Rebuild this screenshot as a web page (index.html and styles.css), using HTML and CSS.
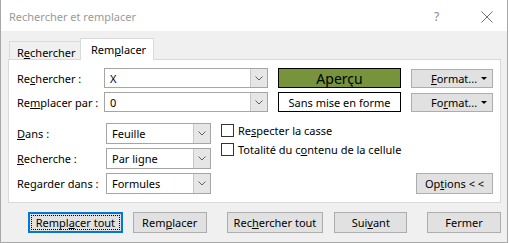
FILE: index.html
```html
<!DOCTYPE html>
<html lang="fr">
    <head>
        <meta charset="UTF-8" />
        <title>Rechercher et remplacer</title>
        <link rel="stylesheet" href="styles.css">
    </head>
    <body>
        <div class="dialog">
            <div class="titlebar">
                <span class="title">Rechercher et remplacer</span>
                <span class="help">?</span>
                <span class="close">
                    <svg width="12" height="12" viewBox="0 0 12 12"><path d="M0.5 0.5 L11.5 11.5 M11.5 0.5 L0.5 11.5" stroke="#707070" stroke-width="1" fill="none"/></svg>
                </span>
            </div>

            <div class="content">
                <div class="tabs">
                    <div class="tab">R<u>e</u>chercher</div>
                    <div class="tab active">Rem<u>p</u>lacer</div>
                </div>

                <div class="panel">
                    <div class="field-row">
                        <label class="label">Re<u>c</u>hercher :</label>
                        <div class="combo">
                            <span class="combo-text">X</span>
                            <span class="combo-arrow"><svg width="8" height="5" viewBox="0 0 8 5"><polyline points="0.5,0.5 4,4 7.5,0.5" stroke="#606060" fill="none"/></svg></span>
                        </div>
                        <div class="preview green">Aperçu</div>
                        <button class="btn format"><span><u>F</u>ormat...</span><span class="tri"></span></button>
                    </div>
                    <div class="field-row">
                        <label class="label">Re<u>m</u>placer par :</label>
                        <div class="combo">
                            <span class="combo-text">0</span>
                            <span class="combo-arrow"><svg width="8" height="5" viewBox="0 0 8 5"><polyline points="0.5,0.5 4,4 7.5,0.5" stroke="#606060" fill="none"/></svg></span>
                        </div>
                        <div class="preview plain">Sans mise en forme</div>
                        <button class="btn format"><span>Fo<u>r</u>mat...</span><span class="tri"></span></button>
                    </div>

                    <div class="lower">
                        <div class="selects">
                            <div class="select-row">
                                <label class="label2"><u>D</u>ans :</label>
                                <div class="select"><span class="combo-text">Feuille</span><span class="combo-arrow"><svg width="8" height="5" viewBox="0 0 8 5"><polyline points="0.5,0.5 4,4 7.5,0.5" stroke="#606060" fill="none"/></svg></span></div>
                            </div>
                            <div class="select-row">
                                <label class="label2"><u>R</u>echerche :</label>
                                <div class="select"><span class="combo-text">Par ligne</span><span class="combo-arrow"><svg width="8" height="5" viewBox="0 0 8 5"><polyline points="0.5,0.5 4,4 7.5,0.5" stroke="#606060" fill="none"/></svg></span></div>
                            </div>
                            <div class="select-row">
                                <label class="label2">Re<u>g</u>arder dans :</label>
                                <div class="select"><span class="combo-text">Formules</span><span class="combo-arrow"><svg width="8" height="5" viewBox="0 0 8 5"><polyline points="0.5,0.5 4,4 7.5,0.5" stroke="#606060" fill="none"/></svg></span></div>
                            </div>
                        </div>
                        <div class="checks">
                            <div class="check"><span class="box"></span>Re<u>s</u>pecter la casse</div>
                            <div class="check"><span class="box"></span>Totalité du c<u>o</u>ntenu de la cellule</div>
                            <button class="btn options">Op<u>t</u>ions &lt; &lt;</button>
                        </div>
                    </div>
                </div>

                <div class="actions">
                    <button class="btn act focused"><span class="focus-ring">Rempl<u>a</u>cer tout</span></button>
                    <button class="btn act b2">Rem<u>p</u>lacer</button>
                    <button class="btn act b3">Rec<u>h</u>ercher tout</button>
                    <button class="btn act b4">Sui<u>v</u>ant</button>
                    <button class="btn act b5">Fermer</button>
                </div>
            </div>
        </div>
    </body>
</html>
```

FILE: styles.css
```css
* {
    margin: 0;
    padding: 0;
    box-sizing: border-box;
}
body {
    font-family: "Noto Sans", "Open Sans", sans-serif;
    font-size: 11px;
    color: #000;
    background: #fff;
}
u {
    text-decoration: underline;
    text-underline-offset: 1px;
}

.dialog {
    width: 508px;
    height: 243px;
    border: 1px solid #a8a8a8;
    border-top: none;
    background: #f0f0f0;
    display: flex;
    flex-direction: column;
}

.titlebar {
    height: 31px;
    background: #fff;
    display: flex;
    align-items: center;
    padding-left: 8px;
    padding-top: 2px;
    color: #9a9a9a;
    font-size: 11px;
}
.title {
    flex: 1;
}
.help {
    width: 12px;
    margin-right: 35px;
    font-size: 12px;
    color: #8a8a8a;
}
.close {
    display: flex;
    margin-right: 14px;
    margin-top: 1px;
}

.content {
    padding: 7px 6px 0 7px;
}

.tabs {
    display: flex;
    align-items: flex-end;
    height: 22px;
    margin-bottom: -1px;
}
.tab {
    width: 71px;
    height: 19px;
    margin-left: 1px;
    padding: 2px 0 0 7px;
    border: 1px solid #d9d9d9;
    border-right: none;
    border-bottom: none;
    display: flex;
    align-items: center;
    line-height: 1;
}
.tab.active {
    width: 74px;
    height: 22px;
    margin-left: 0;
    background: #fff;
    border-right: 1px solid #d9d9d9;
    position: relative;
    z-index: 1;
    padding: 0 0 0 10px;
}

.panel {
    width: 493px;
    height: 144px;
    background: #fff;
    border: 1px solid #d9d9d9;
    padding: 8px 6px 0 8px;
}

.field-row {
    display: flex;
    align-items: center;
    height: 20px;
    margin-bottom: 4px;
}
.label {
    width: 87px;
}
.combo {
    width: 164px;
    height: 20px;
    border: 1px solid #a5a5a5;
    display: flex;
    align-items: stretch;
    margin-right: 10px;
}
.combo-text {
    flex: 1;
    padding-left: 5px;
    display: flex;
    align-items: center;
}
.combo-arrow {
    width: 17px;
    background: #e6e6e6;
    border-left: 1px solid #c8c8c8;
    display: flex;
    align-items: center;
    justify-content: center;
}
.preview {
    width: 123px;
    height: 20px;
    border: 1px solid #000;
    display: flex;
    align-items: center;
    justify-content: center;
    margin-right: 10px;
}
.preview.green {
    background: #77933c;
    font-size: 14px;
}
.preview.plain {
    background: #fff;
}

.btn {
    font-family: inherit;
    font-size: 11px;
    color: #000;
    background: #e1e1e1;
    border: 1px solid #adadad;
}
.format {
    width: 82px;
    height: 19px;
    display: flex;
    align-items: center;
    justify-content: space-between;
    padding: 0 5px 0 19px;
}
.tri {
    width: 0;
    height: 0;
    border-left: 3px solid transparent;
    border-right: 3px solid transparent;
    border-top: 3px solid #000;
}

.lower {
    display: flex;
    margin-top: 11px;
}
.selects {
    display: flex;
    flex-direction: column;
    gap: 4px;
}
.select-row {
    display: flex;
    align-items: center;
}
.label2 {
    width: 89px;
}
.select {
    width: 105px;
    height: 21px;
    border: 1px solid #a5a5a5;
    display: flex;
    align-items: stretch;
}

.checks {
    flex: 1;
    margin-left: 10px;
    display: flex;
    flex-direction: column;
}
.check {
    display: flex;
    align-items: flex-start;
    height: 19px;
}
.box {
    width: 13px;
    height: 13px;
    border: 1px solid #333;
    background: #fff;
    margin: 1px 4px 0 0;
}
.options {
    width: 77px;
    height: 21px;
    margin-top: auto;
    margin-right: 1px;
    align-self: flex-end;
}

.actions {
    display: flex;
    margin-top: 9px;
}
.act {
    height: 21px;
    width: 74px;
}
.focused {
    width: 95px;
    margin-left: 20px;
    border: 2px solid #0078d7;
    padding: 1px;
    display: flex;
}
.focus-ring {
    flex: 1;
    border: 1px dotted #000;
    display: flex;
    align-items: center;
    justify-content: center;
}
.b2 {
    margin-left: 10px;
}
.b3 {
    width: 97px;
    margin-left: 20px;
}
.b4 {
    width: 73px;
    margin-left: 11px;
}
.b5 {
    margin-left: 20px;
}
```
